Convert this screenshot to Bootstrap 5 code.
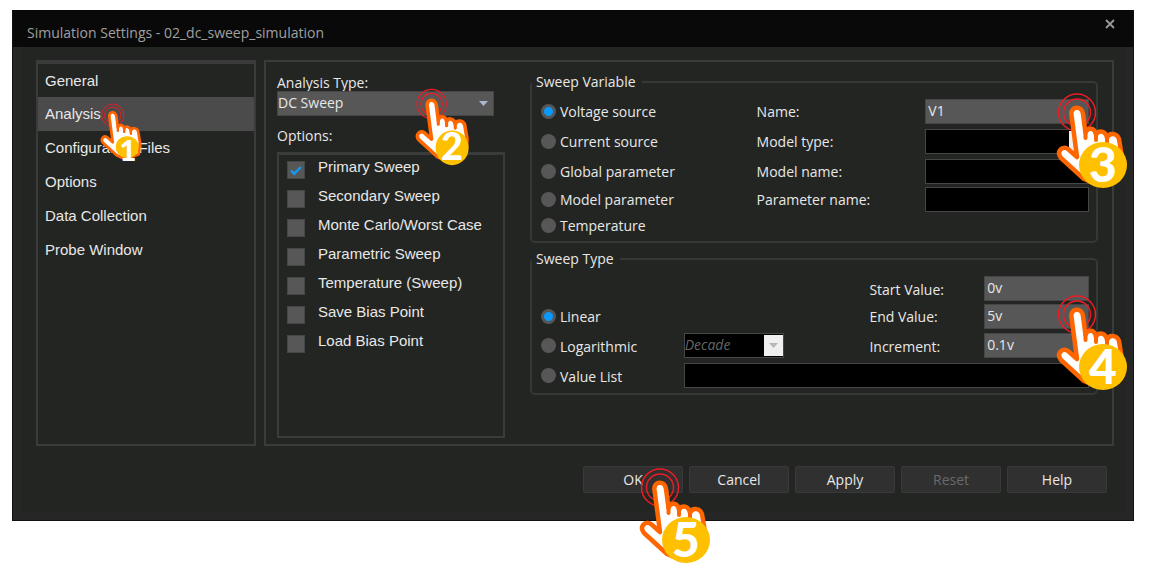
<!DOCTYPE html>
<html lang="en">
<head>
<meta charset="utf-8">
<meta name="viewport" content="width=device-width, initial-scale=1">
<title>Simulation Settings</title>
<link href="https://cdn.jsdelivr.net/npm/bootstrap@5.3.0/dist/css/bootstrap.min.css" rel="stylesheet">
<style>
  :root { --surface: #232522; --line: #3a3b3a; --field: #575757; --ink: #e8e8e8; --ui: "Open Sans", "Noto Sans", sans-serif; --list: "Liberation Sans", sans-serif; }
  body { background: #fff; font-family: var(--ui); font-size: 14px; line-height: 20px; color: var(--ink); padding: 10px 18px 50px 12px; }
  .dialog { min-height: calc(100vh - 60px); background: var(--surface); border: 1px solid #111; border-top: 0; }
  .dialog-frame { border: 8px solid #262626; border-top: 0; padding: 13px 11px 19px 15px; }
  .titlebar { background: #090909; height: 37px; padding: 13px 17px 0 14px; color: #a0a0a0; }
  .titlebar h1 { font-size: 14px; line-height: 20px; font-weight: 400; }
  .titlebar button { background: none; border: 0; padding: 0; width: 12px; height: 12px; line-height: 0; margin-top: -5px; }
  .pane { border: 2px solid var(--line); }
  .side { width: 220px; border-top-width: 4px; font-family: var(--list); font-size: 15px; }
  .side .list-group-item { background: none; border: 0; color: var(--ink); height: 34px; padding: 7px; }
  .side .list-group-item.active { background: #4b4b4b; }
  .main-pane { padding: 9px 14px 6px 11px; gap: 25px; }
  .types { width: 228px; }
  .tight-label { line-height: 16px; }
  .checks { border: 2px solid var(--line); border-top-width: 3px; padding: 3px 8px; font-family: var(--list); font-size: 15px; }
  .checks .item { height: 29px; gap: 13px; }
  .checks .item label { line-height: 18px; }
  .form-check-input.tick { margin: 3px 0 0; width: 18px; height: 18px; border: 1px solid #464646; border-radius: 0; background-color: var(--field); background-size: 14px; background-position: center; }
  .form-check-input.tick:checked { background-color: var(--field); border-color: #464646;
    background-image: url("data:image/svg+xml,%3Csvg xmlns='http://www.w3.org/2000/svg' viewBox='0 0 14 14'%3E%3Cpath d='M2 7.5l3.2 3.2L12 4' fill='none' stroke='%23109bf5' stroke-width='2.4'/%3E%3C/svg%3E"); }
  .form-check-input.dot { margin: 0; width: 15px; height: 15px; border: 0; background-color: #575757; background-image: none; flex: none; }
  .form-check-input.dot:checked { background-image: radial-gradient(circle, #0a98fb 4px, #575757 5px); }
  .settings { padding-top: 1px; }
  fieldset { border: 2px solid #363836; border-radius: 5px; padding: 4px 7px 3px 9px; }
  fieldset + fieldset { margin-top: 6px; padding-top: 6px; }
  legend { float: none; width: auto; font-size: 14px; line-height: 20px; margin: 0 0 0 -9px; padding: 0 6px 0 4px; }
  .grid-var { display: grid; grid-template-columns: 216fr 169fr 164fr; grid-template-rows: 30px 30px 30px 26px 26px; align-items: center; }
  .grid-type { display: grid; grid-template-columns: 143fr 186fr 115fr 105fr; grid-template-rows: 27px 28px 31px 29px; align-items: center; }
  .grid-var label, .grid-type label { padding-top: 2px; }
  .grid-type .wide { grid-column: span 3; }
  .choice { gap: 4px; }
  .box { height: 25px; width: 100%; border: 1px solid #464646; border-radius: 0; background: var(--field); color: var(--ink); padding: 0 2px 2px; font-size: 14px; line-height: 20px; }
  .box.dark, .box.dark:disabled { background-color: #000; color: #666; opacity: 1; }
  select.box { background-repeat: no-repeat; background-size: 19px 21px; background-position: right 0 top 1px; appearance: none; padding-left: 0; }
  select.open-arrow { background-image: url("data:image/svg+xml,%3Csvg xmlns='http://www.w3.org/2000/svg' viewBox='0 0 19 21'%3E%3Cpath d='M5 8h9l-4.5 5z' fill='%23a9b8d6'/%3E%3C/svg%3E"); }
  select.dark { background-image: url("data:image/svg+xml,%3Csvg xmlns='http://www.w3.org/2000/svg' viewBox='0 0 19 21'%3E%3Crect width='19' height='21' fill='%23f0f0f0'/%3E%3Cpath d='M5 8h9l-4.5 5z' fill='%23b8b8b8'/%3E%3C/svg%3E"); }
  .decade { width: 100px; font-style: italic; }
  .dc { width: 217px; }
  .footer-row { gap: 6px; padding: 20px 7px 0 0; }
  .btn.act { width: 100px; height: 27px; border-radius: 2px; border: 1px solid #393939; background: #303030; color: var(--ink); font-size: 14px; line-height: 20px; padding: 3px 0 2px; }
  .btn.act:disabled { color: #6a6a6a; opacity: 1; }
  .pointer { position: absolute; pointer-events: none; z-index: 3; overflow: visible; }
  .pointer ellipse { fill: #ffc000; }
  .pointer text { font-family: Lato, sans-serif; font-weight: 900; font-size: 48px; fill: #fff; text-anchor: middle; }
  .on-analysis { left: 62px; top: 5px; width: 46px; height: 61px; }
  .on-type { right: 19px; top: -4px; width: 60px; height: 79px; }
  .on-name { right: -43px; top: -8px; width: 76px; height: 100px; }
  .on-end { right: -43px; top: -11px; width: 76px; height: 100px; }
  .on-ok { left: 56px; top: 0; width: 76px; height: 100px; }
</style>
</head>
<body>
<svg width="0" height="0" class="position-absolute" aria-hidden="true">
  <symbol id="hand" viewBox="6 6 76 100">
    <g fill="none" stroke="#ed1c24" stroke-width="1.5"><circle cx="27" cy="27.500" r="18.500"/><circle cx="27" cy="27.500" r="13.500"/></g>
    <path d="M34 94L11 73C6 67 12 60 18 64L27 72L21.500 30C20 21 32 20 33 29L35.500 48C37 42 45 42 46 50C48 44 56 46 57 53C59 47 67 48 69 54L72 72L70 92L48 100Z" fill="#fff" stroke="#ff6600" stroke-width="4.500" stroke-linejoin="round"/>
    <path d="M35.500 47v6M46 49v6M57 52v6" stroke="#ff6600" stroke-width="4" stroke-linecap="round"/>
  </symbol>
</svg>

<main class="dialog d-flex flex-column">
  <header class="titlebar d-flex justify-content-between">
    <h1 class="m-0">Simulation Settings - 02_dc_sweep_simulation</h1>
    <button type="button" aria-label="Close"><svg width="10" height="10" viewBox="0 0 10 10"><path d="M1 1l8 8M9 1L1 9" stroke="#9a9a9a" stroke-width="1.800"/></svg></button>
  </header>

  <div class="dialog-frame d-flex flex-column flex-grow-1">
    <div class="d-flex flex-grow-1 gap-2">
      <nav class="pane side flex-shrink-0">
        <div class="list-group list-group-flush">
          <a href="#" class="list-group-item">General</a>
          <a href="#" class="list-group-item active position-relative">Analysis
            <svg class="pointer on-analysis" viewBox="6 6 76 100" aria-hidden="true"><use href="#hand" x="6" y="6" width="76" height="100"/><ellipse cx="51" cy="80" rx="19" ry="18"/><text x="52" y="103">1</text></svg>
          </a>
          <a href="#" class="list-group-item">Configuration Files</a>
          <a href="#" class="list-group-item">Options</a>
          <a href="#" class="list-group-item">Data Collection</a>
          <a href="#" class="list-group-item">Probe Window</a>
        </div>
      </nav>

      <section class="pane main-pane d-flex flex-grow-1">
        <div class="types d-flex flex-column flex-shrink-0">
          <label class="tight-label mt-1" for="type">Analysis Type:</label>
          <div class="position-relative dc">
            <select id="type" class="box open-arrow d-block"><option>DC Sweep</option></select>
            <svg class="pointer on-type" viewBox="6 6 76 100" aria-hidden="true"><use href="#hand" x="6" y="6" width="76" height="100"/><ellipse cx="53" cy="83" rx="21" ry="22"/><text x="53" y="99">2</text></svg>
          </div>
          <div class="tight-label my-2 pt-1" id="opts">Options:</div>
          <div class="checks flex-grow-1" role="group" aria-labelledby="opts">
            <div class="item d-flex"><input class="form-check-input tick" type="checkbox" id="c1" checked><label for="c1">Primary Sweep</label></div>
            <div class="item d-flex"><input class="form-check-input tick" type="checkbox" id="c2"><label for="c2">Secondary Sweep</label></div>
            <div class="item d-flex"><input class="form-check-input tick" type="checkbox" id="c3"><label for="c3">Monte Carlo/Worst Case</label></div>
            <div class="item d-flex"><input class="form-check-input tick" type="checkbox" id="c4"><label for="c4">Parametric Sweep</label></div>
            <div class="item d-flex"><input class="form-check-input tick" type="checkbox" id="c5"><label for="c5">Temperature (Sweep)</label></div>
            <div class="item d-flex"><input class="form-check-input tick" type="checkbox" id="c6"><label for="c6">Save Bias Point</label></div>
            <div class="item d-flex"><input class="form-check-input tick" type="checkbox" id="c7"><label for="c7">Load Bias Point</label></div>
          </div>
        </div>

        <div class="settings flex-grow-1">
          <fieldset>
            <legend>Sweep Variable</legend>
            <div class="grid-var">
              <div class="choice d-flex align-items-center"><input class="form-check-input dot" type="radio" name="v" id="v1" checked><label for="v1">Voltage source</label></div>
              <label for="name">Name:</label>
              <div class="position-relative">
                <input id="name" class="box d-block" value="V1">
                <svg class="pointer on-name" viewBox="6 6 76 100" aria-hidden="true"><use href="#hand" x="6" y="6" width="76" height="100"/><ellipse cx="53" cy="80" rx="24" ry="23"/><text x="53" y="97">3</text></svg>
              </div>
              <div class="choice d-flex align-items-center"><input class="form-check-input dot" type="radio" name="v" id="v2"><label for="v2">Current source</label></div>
              <label for="mtype">Model type:</label>
              <select id="mtype" class="box dark" disabled><option></option></select>
              <div class="choice d-flex align-items-center"><input class="form-check-input dot" type="radio" name="v" id="v3"><label for="v3">Global parameter</label></div>
              <label for="mname">Model name:</label>
              <input id="mname" class="box dark" disabled>
              <div class="choice d-flex align-items-center"><input class="form-check-input dot" type="radio" name="v" id="v4"><label for="v4">Model parameter</label></div>
              <label for="pname">Parameter name:</label>
              <input id="pname" class="box dark" disabled>
              <div class="choice d-flex align-items-center"><input class="form-check-input dot" type="radio" name="v" id="v5"><label for="v5">Temperature</label></div>
            </div>
          </fieldset>

          <fieldset>
            <legend>Sweep Type</legend>
            <div class="grid-type">
              <span></span><span></span>
              <label for="start">Start Value:</label>
              <input id="start" class="box" value="0v">
              <div class="choice d-flex align-items-center"><input class="form-check-input dot" type="radio" name="t" id="t1" checked><label for="t1">Linear</label></div>
              <span></span>
              <label for="end">End Value:</label>
              <div class="position-relative">
                <input id="end" class="box d-block" value="5v">
                <svg class="pointer on-end" viewBox="6 6 76 100" aria-hidden="true"><use href="#hand" x="6" y="6" width="76" height="100"/><ellipse cx="53" cy="80" rx="24" ry="23"/><text x="53" y="97">4</text></svg>
              </div>
              <div class="choice d-flex align-items-center"><input class="form-check-input dot" type="radio" name="t" id="t2"><label for="t2">Logarithmic</label></div>
              <select class="box dark decade" aria-label="Logarithmic scale" disabled><option>Decade</option></select>
              <label for="inc">Increment:</label>
              <input id="inc" class="box" value="0.1v">
              <div class="choice d-flex align-items-center"><input class="form-check-input dot" type="radio" name="t" id="t3"><label for="t3">Value List</label></div>
              <input class="box dark wide" aria-label="Value list" disabled>
            </div>
          </fieldset>
        </div>
      </section>
    </div>

    <footer class="footer-row d-flex justify-content-end">
      <div class="position-relative">
        <button type="button" class="btn act d-block">OK</button>
        <svg class="pointer on-ok" viewBox="6 6 76 100" aria-hidden="true"><use href="#hand" x="6" y="6" width="76" height="100"/><ellipse cx="53" cy="80" rx="24" ry="23"/><text x="53" y="97">5</text></svg>
      </div>
      <button type="button" class="btn act">Cancel</button>
      <button type="button" class="btn act">Apply</button>
      <button type="button" class="btn act" disabled>Reset</button>
      <button type="button" class="btn act">Help</button>
    </footer>
  </div>
</main>
<script src="https://cdn.jsdelivr.net/npm/bootstrap@5.3.0/dist/js/bootstrap.bundle.min.js"></script>
</body>
</html>
